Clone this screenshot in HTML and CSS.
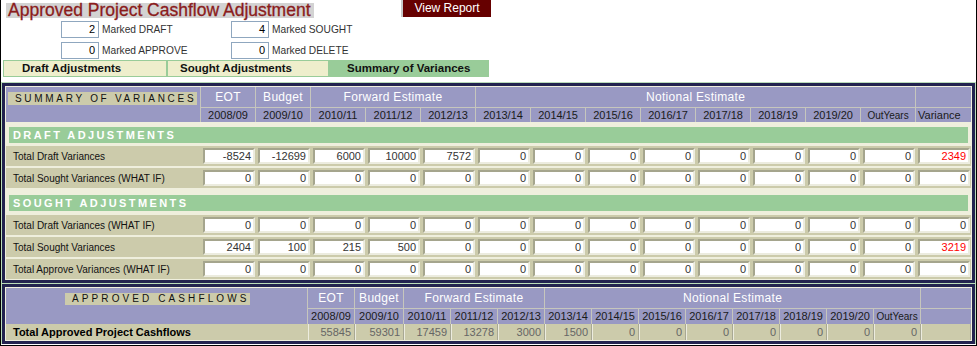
FILE: index.html
```html
<!DOCTYPE html>
<html>
<head>
<meta charset="utf-8">
<title>Approved Project Cashflow Adjustment</title>
<link rel="stylesheet" href="styles.css">
</head>
<body>
<div class="page">
  <div class="top">
    <div class="title-row">
      <h1 class="title">Approved Project Cashflow Adjustment</h1>
      <a class="btn-report">View Report</a>
    </div>
    <div class="counters">
      <div class="counter"><span class="counter-box">2</span><span class="counter-label">Marked DRAFT</span></div>
      <div class="counter"><span class="counter-box">4</span><span class="counter-label">Marked SOUGHT</span></div>
      <div class="counter"><span class="counter-box">0</span><span class="counter-label">Marked APPROVE</span></div>
      <div class="counter"><span class="counter-box">0</span><span class="counter-label">Marked DELETE</span></div>
    </div>
    <div class="tabs">
      <div class="tab tab-draft">Draft Adjustments</div>
      <div class="tab tab-sought">Sought Adjustments</div>
      <div class="tab tab-summary is-active">Summary of Variances</div>
    </div>
  </div>

  <div class="panels">
    <div class="panel">
      <table class="grid grid-summary">
        <colgroup>
          <col class="c-label">
          <col class="c-num"><col class="c-num"><col class="c-num"><col class="c-num"><col class="c-num"><col class="c-num"><col class="c-num">
          <col class="c-num"><col class="c-num"><col class="c-num"><col class="c-num"><col class="c-num"><col class="c-num"><col class="c-num">
        </colgroup>
        <thead>
          <tr class="hd-group">
            <th rowspan="2" class="hd-label"><div class="hd-title">SUMMARY OF VARIANCES</div></th>
            <th>EOT</th>
            <th>Budget</th>
            <th colspan="3">Forward Estimate</th>
            <th colspan="8">Notional Estimate</th>
            <th></th>
          </tr>
          <tr class="hd-years">
            <th>2008/09</th><th>2009/10</th><th>2010/11</th><th>2011/12</th><th>2012/13</th><th>2013/14</th><th>2014/15</th>
            <th>2015/16</th><th>2016/17</th><th>2017/18</th><th>2018/19</th><th>2019/20</th><th class="hd-small">OutYears</th><th class="hd-left">Variance</th>
          </tr>
        </thead>
        <tbody>
          <tr class="section section-first"><td colspan="15"><div class="section-bar">DRAFT ADJUSTMENTS</div></td></tr>
          <tr class="data">
            <td class="label">Total Draft Variances</td>
            <td><div class="box">-8524</div></td><td><div class="box">-12699</div></td><td><div class="box">6000</div></td><td><div class="box">10000</div></td><td><div class="box">7572</div></td>
            <td><div class="box">0</div></td><td><div class="box">0</div></td><td><div class="box">0</div></td><td><div class="box">0</div></td><td><div class="box">0</div></td>
            <td><div class="box">0</div></td><td><div class="box">0</div></td><td><div class="box">0</div></td><td><div class="box box-red">2349</div></td>
          </tr>
          <tr class="data">
            <td class="label">Total Sought Variances (WHAT IF)</td>
            <td><div class="box">0</div></td><td><div class="box">0</div></td><td><div class="box">0</div></td><td><div class="box">0</div></td><td><div class="box">0</div></td>
            <td><div class="box">0</div></td><td><div class="box">0</div></td><td><div class="box">0</div></td><td><div class="box">0</div></td><td><div class="box">0</div></td>
            <td><div class="box">0</div></td><td><div class="box">0</div></td><td><div class="box">0</div></td><td><div class="box">0</div></td>
          </tr>
          <tr class="section"><td colspan="15"><div class="section-bar">SOUGHT ADJUSTMENTS</div></td></tr>
          <tr class="data">
            <td class="label">Total Draft Variances (WHAT IF)</td>
            <td><div class="box">0</div></td><td><div class="box">0</div></td><td><div class="box">0</div></td><td><div class="box">0</div></td><td><div class="box">0</div></td>
            <td><div class="box">0</div></td><td><div class="box">0</div></td><td><div class="box">0</div></td><td><div class="box">0</div></td><td><div class="box">0</div></td>
            <td><div class="box">0</div></td><td><div class="box">0</div></td><td><div class="box">0</div></td><td><div class="box">0</div></td>
          </tr>
          <tr class="data">
            <td class="label">Total Sought Variances</td>
            <td><div class="box">2404</div></td><td><div class="box">100</div></td><td><div class="box">215</div></td><td><div class="box">500</div></td><td><div class="box">0</div></td>
            <td><div class="box">0</div></td><td><div class="box">0</div></td><td><div class="box">0</div></td><td><div class="box">0</div></td><td><div class="box">0</div></td>
            <td><div class="box">0</div></td><td><div class="box">0</div></td><td><div class="box">0</div></td><td><div class="box box-red">3219</div></td>
          </tr>
          <tr class="data">
            <td class="label">Total Approve Variances (WHAT IF)</td>
            <td><div class="box">0</div></td><td><div class="box">0</div></td><td><div class="box">0</div></td><td><div class="box">0</div></td><td><div class="box">0</div></td>
            <td><div class="box">0</div></td><td><div class="box">0</div></td><td><div class="box">0</div></td><td><div class="box">0</div></td><td><div class="box">0</div></td>
            <td><div class="box">0</div></td><td><div class="box">0</div></td><td><div class="box">0</div></td><td><div class="box">0</div></td>
          </tr>
        </tbody>
      </table>
    </div>

    <div class="panel">
      <table class="grid grid-approved">
        <colgroup>
          <col class="a-label"><col class="a-eot"><col class="a-budget">
          <col class="a-year"><col class="a-year"><col class="a-year"><col class="a-year"><col class="a-year"><col class="a-year">
          <col class="a-year"><col class="a-year"><col class="a-year"><col class="a-year"><col class="a-year">
          <col class="a-last">
        </colgroup>
        <thead>
          <tr class="hd-group">
            <th rowspan="2" class="hd-label"><div class="hd-title hd-title-approved">APPROVED CASHFLOWS</div></th>
            <th>EOT</th>
            <th>Budget</th>
            <th colspan="3">Forward Estimate</th>
            <th colspan="8">Notional Estimate</th>
            <th></th>
          </tr>
          <tr class="hd-years">
            <th>2008/09</th><th>2009/10</th><th>2010/11</th><th>2011/12</th><th>2012/13</th><th>2013/14</th><th>2014/15</th>
            <th>2015/16</th><th>2016/17</th><th>2017/18</th><th>2018/19</th><th>2019/20</th><th class="hd-small">OutYears</th><th></th>
          </tr>
        </thead>
        <tbody>
          <tr class="approved-row">
            <td class="label-bold">Total Approved Project Cashflows</td>
            <td class="cell">55845</td><td class="cell">59301</td><td class="cell">17459</td><td class="cell">13278</td><td class="cell">3000</td>
            <td class="cell">1500</td><td class="cell">0</td><td class="cell">0</td><td class="cell">0</td><td class="cell">0</td>
            <td class="cell">0</td><td class="cell">0</td><td class="cell">0</td><td class="cell"></td>
          </tr>
        </tbody>
      </table>
    </div>
  </div>
</div>
</body>
</html>
```

FILE: styles.css
```css
* {
  box-sizing: border-box;
}

body {
  margin: 0;
  background: #ffffff;
  font-family: "Liberation Sans", Arial, sans-serif;
  font-size: 11px;
  color: #111111;
}

.page {
  width: 977px;
  height: 346px;
  border-left: 1px solid #000000;
  border-right: 1px solid #000000;
  border-bottom: 1px solid #000000;
  overflow: hidden;
}

/* ---------- top area ---------- */
.top {
  height: 82px;
  padding-left: 1px;
}

.title-row {
  display: flex;
  height: 18px;
}

.title {
  margin: 3px 0 0 4px;
  width: 308px;
  height: 15px;
  padding-left: 2px;
  background: #d3d3d3;
  color: #8b1c1c;
  font-size: 17.5px;
  font-weight: normal;
  line-height: 15px;
  white-space: nowrap;
  -webkit-text-stroke: 0.3px #8b1c1c;
}

.btn-report {
  margin-left: 87px;
  width: 90px;
  height: 17px;
  border-left: 2px solid #c8c8c8;
  background: #660000;
  color: #ffffff;
  font-size: 12px;
  line-height: 17px;
  text-align: center;
}

.counters {
  display: grid;
  grid-template-columns: 170px 170px;
  row-gap: 4px;
  margin: 3px 0 0 59px;
}

.counter {
  display: flex;
  align-items: center;
  gap: 3px;
  height: 17px;
}

.counter-box {
  width: 38px;
  height: 17px;
  padding-right: 3px;
  border: 1px solid #8fa7bf;
  background: #ffffff;
  font-size: 11px;
  line-height: 15px;
  text-align: right;
  color: #000000;
}

.counter-label {
  font-size: 10.2px;
  color: #333333;
}

.tabs {
  display: flex;
  margin: 1px 0 0 1px;
  height: 17px;
}

.tab {
  border: 1px solid #99cc99;
  background: #eeeecc;
  font-size: 11.5px;
  font-weight: bold;
  line-height: 15px;
  white-space: nowrap;
}

.tab-draft {
  width: 164px;
  padding-left: 18px;
}

.tab-sought {
  width: 162px;
  padding-left: 12px;
}

.tab-summary {
  width: 160px;
  padding-left: 17px;
}

.tab.is-active {
  background: #99cc99;
}

/* ---------- panels ---------- */
.panels {
  background: #b9dbb9;
  padding: 1px 1px 0;
}

.panel {
  border: 3px solid #22224f;
  background: #efefdd;
  padding: 1px;
}

.panel + .panel {
  margin-top: 1px;
}

.grid {
  width: 965px;
  border-collapse: separate;
  border-spacing: 0;
  table-layout: fixed;
}

.c-label { width: 195px; }
.c-num { width: 55px; }

.a-label { width: 302px; }
.a-eot { width: 47px; }
.a-budget { width: 49px; }
.a-year { width: 47px; }
.a-last { width: 50px; }

.grid th {
  background: #9999c3;
  padding: 0;
  font-weight: normal;
  white-space: nowrap;
}

.hd-group th {
  height: 21px;
  border-right: 1px solid #c6c6bd;
  border-bottom: 1px solid #c6c6bd;
  color: #ffffff;
  font-size: 12px;
  letter-spacing: 0.3px;
  text-align: center;
}

.hd-group th:last-child {
  border-right: 0;
}

.hd-years th {
  height: 14px;
  border-right: 1px solid #c6c6bd;
  color: #1a1a1a;
  font-size: 11px;
  line-height: 13px;
  text-align: center;
}

.hd-years th:last-child {
  border-right: 0;
}

.grid-approved .hd-years th {
  height: 15px;
}

.hd-years .hd-small {
  font-size: 10px;
}

.hd-years .hd-left {
  text-align: left;
  padding-left: 2px;
}

.hd-group .hd-label {
  vertical-align: top;
  padding: 5px 3px 0 2px;
  border-bottom: 0;
}

.hd-title {
  height: 13px;
  padding-left: 7px;
  background: #cccbab;
  color: #111111;
  font-size: 10px;
  line-height: 13px;
  letter-spacing: 2.7px;
  text-align: left;
}

.hd-title-approved {
  width: 185px;
  height: 12px;
  margin-left: 57px;
  padding-left: 7px;
  line-height: 12px;
  letter-spacing: 3.1px;
}

/* section bars */
.section td {
  padding: 7px 3px 2px;
}

.section-first td {
  padding: 5px 3px 1px;
}

.section-bar {
  height: 16px;
  padding-left: 4px;
  background: #99cc99;
  color: #ffffff;
  font-size: 11px;
  font-weight: bold;
  line-height: 16px;
  letter-spacing: 2.4px;
}

/* data rows */
.data td {
  height: 22px;
  padding: 2px 1px 2px 2px;
  border-top: 2px solid #efefdd;
  background: #cccbab;
}

.data .label {
  padding-left: 7px;
  font-size: 10px;
  color: #111111;
  white-space: nowrap;
}

.box {
  height: 16px;
  padding-right: 2px;
  border: 2px solid;
  border-color: #a5a58d #ececdf #ececdf #a5a58d;
  background: #ffffff;
  color: #333333;
  font-size: 11px;
  line-height: 12px;
  text-align: right;
}

.box-red {
  color: #ff0000;
}

/* approved row */
.approved-row td {
  height: 16px;
  background: #cccbab;
}

.approved-row .label-bold {
  padding-left: 7px;
  font-size: 11px;
  font-weight: bold;
  color: #000000;
  white-space: nowrap;
}

.approved-row .cell {
  padding-right: 3px;
  border-left: 1px solid #ececdf;
  border-right: 1px solid #a8a894;
  color: #666666;
  font-size: 11px;
  text-align: right;
}
```
